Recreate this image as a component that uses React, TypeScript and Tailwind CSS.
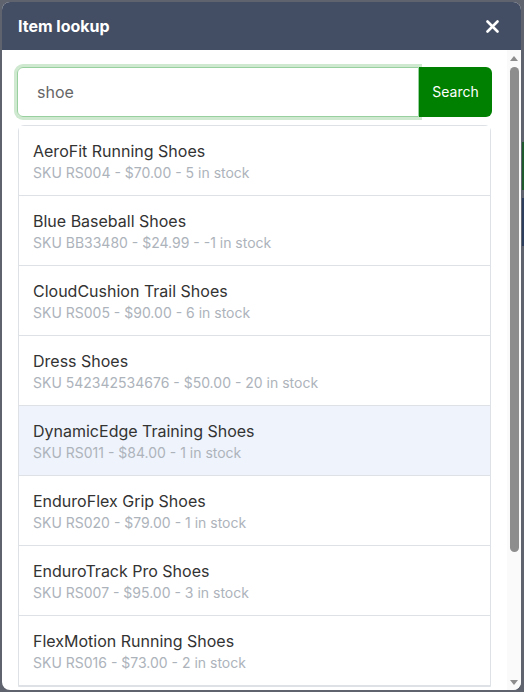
import React from "react";

const items = [
  { name: "AeroFit Running Shoes", sub: "SKU RS004 - $70.00 - 5 in stock" },
  { name: "Blue Baseball Shoes", sub: "SKU BB33480 - $24.99 - -1 in stock" },
  { name: "CloudCushion Trail Shoes", sub: "SKU RS005 - $90.00 - 6 in stock" },
  { name: "Dress Shoes", sub: "SKU 542342534676 - $50.00 - 20 in stock" },
  { name: "DynamicEdge Training Shoes", sub: "SKU RS011 - $84.00 - 1 in stock", active: true },
  { name: "EnduroFlex Grip Shoes", sub: "SKU RS020 - $79.00 - 1 in stock" },
  { name: "EnduroTrack Pro Shoes", sub: "SKU RS007 - $95.00 - 3 in stock" },
  { name: "FlexMotion Running Shoes", sub: "SKU RS016 - $73.00 - 2 in stock" },
];

export default function App() {
  return (
    <div
      className="relative w-[524px] h-[692px] bg-[#5f636d] overflow-hidden p-[2px]"
      style={{ fontFamily: "Inter, 'Noto Sans', sans-serif" }}
    >
      <div className="absolute right-0 top-[142px] w-[2px] h-[48px] bg-[#1f5a2e]" />
      <div className="absolute right-0 top-[198px] w-[2px] h-[48px] bg-[#2d3e5c]" />
      <div className="relative w-[519px] h-[688px] rounded-lg overflow-hidden flex flex-col bg-white">
        <div className="h-12 shrink-0 bg-[#434d63] flex items-center justify-between pl-4 pr-[22px]">
          <span className="text-white font-bold text-base">Item lookup</span>
          <svg width="13" height="13" viewBox="0 0 13 13">
            <path d="M1.5 1.5 L11.5 11.5 M11.5 1.5 L1.5 11.5" stroke="white" strokeWidth="2.6" strokeLinecap="round" />
          </svg>
        </div>
        <div className="flex-1 flex overflow-hidden">
          <div className="flex-1 px-4 pt-[17px] overflow-hidden">
            <div className="flex h-[50px] mx-[-1px]">
              <div className="flex-1 flex items-center border border-[#99d09f] rounded-l-md pl-[19px] shadow-[0_0_0_3px_#cfe8d0] text-base text-[#666]">
                shoe
              </div>
              <button className="w-[73px] bg-[#008000] text-white text-sm rounded-r-md">Search</button>
            </div>
            <div className="mt-2 border border-[#dee2e6] rounded-t-md">
              {items.map((it) => (
                <div
                  key={it.name}
                  className={`h-[70px] flex flex-col justify-center px-[14px] border-b border-[#dee2e6] ${
                    it.active ? "bg-[#eff3fb]" : "bg-white"
                  }`}
                >
                  <div className="text-base leading-6 text-[#333]">{it.name}</div>
                  <div className="text-sm leading-5 text-[#adb3bb]">{it.sub}</div>
                </div>
              ))}
            </div>
          </div>
          <div className="w-[14px] shrink-0 bg-[#fafafa] flex flex-col items-center">
            <svg width="10" height="8" viewBox="0 0 10 8" className="mt-[5px]">
              <path d="M1 6 L5 1 L9 6 Z" fill="#8d8d8d" />
            </svg>
            <div className="mt-[4px] w-[9px] h-[485px] rounded-full bg-[#8d8d8d]" />
            <div className="flex-1" />
            <svg width="10" height="8" viewBox="0 0 10 8" className="mb-[4px]">
              <path d="M1 2 L5 7 L9 2 Z" fill="#8d8d8d" />
            </svg>
          </div>
        </div>
      </div>
    </div>
  );
}
